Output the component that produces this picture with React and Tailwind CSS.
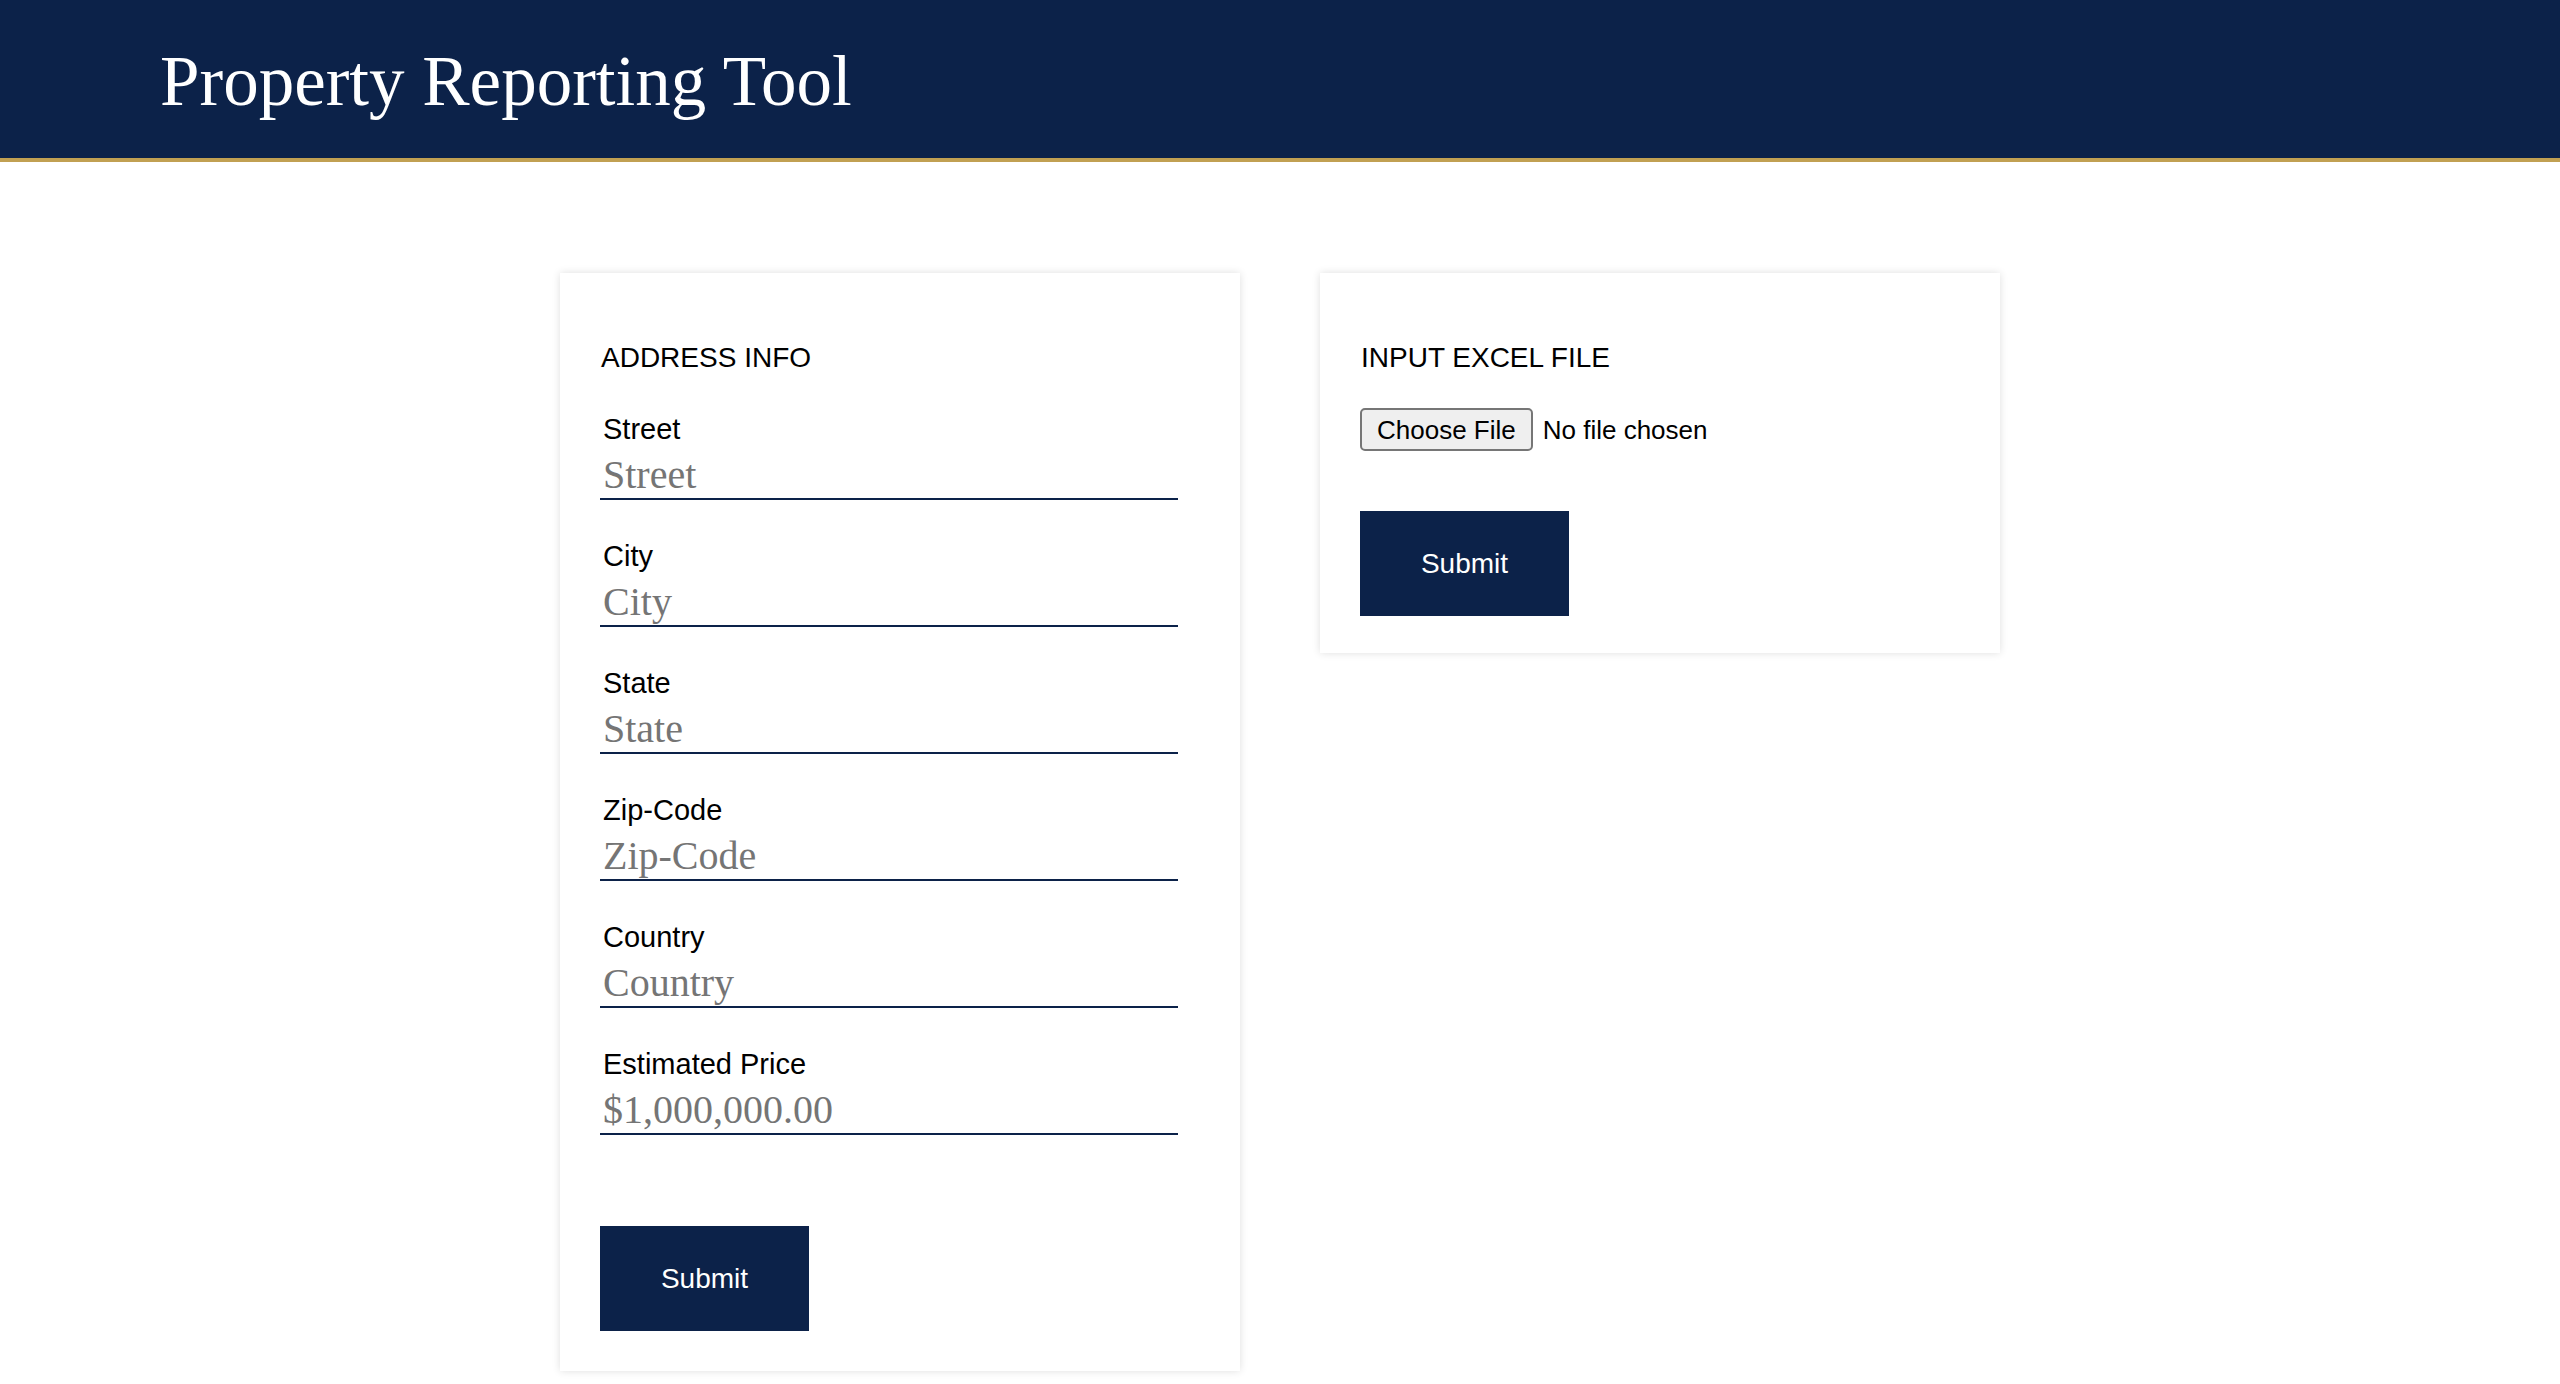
import React from 'react';

const fields = [
  { label: 'Street', placeholder: 'Street' },
  { label: 'City', placeholder: 'City' },
  { label: 'State', placeholder: 'State' },
  { label: 'Zip-Code', placeholder: 'Zip-Code' },
  { label: 'Country', placeholder: 'Country' },
  { label: 'Estimated Price', placeholder: '$1,000,000.00' },
];

const sans = "font-['Liberation_Sans',Arial,sans-serif]";
const serif = "font-['Liberation_Serif','Times_New_Roman',serif]";

const SubmitButton = () => (
  <button
    type="button"
    className={`${sans} w-[209px] h-[105px] bg-[#0c2249] text-white text-[28px] leading-[32px]`}
  >
    Submit
  </button>
);

const Field = ({ label, placeholder }) => (
  <div className="flex flex-col">
    <label className={`${sans} ml-[3px] text-[29px] leading-[32px] text-black`}>{label}</label>
    <input
      type="text"
      placeholder={placeholder}
      className={`${serif} mt-[5px] w-[578px] h-[50px] pl-[3px] text-[40px] leading-[48px] text-black placeholder:text-[#757575] border-b-2 border-[#0c2249] outline-none bg-transparent`}
    />
  </div>
);

export default function App() {
  return (
    <div className="min-h-screen bg-white">
      <header className="h-[162px] bg-[#0c2249] border-b-4 border-[#c1a052] flex items-start pl-[160px]">
        <h1 className={`${serif} mt-[41px] text-[71px] leading-[80px] text-white`}>
          Property Reporting Tool
        </h1>
      </header>

      <main className="flex justify-center items-start gap-[80px] pt-[111px] pb-[20px]">
        <section className="w-[680px] bg-white shadow-[0_0_8px_rgba(0,0,0,0.13)] pl-[40px] pr-[40px] pt-[69px] pb-[40px]">
          <h2 className={`${sans} ml-[1px] text-[28px] leading-[32px] text-black`}>ADDRESS INFO</h2>
          <div className="mt-[39px] flex flex-col gap-[40px]">
            {fields.map(f => (
              <Field key={f.label} label={f.label} placeholder={f.placeholder} />
            ))}
          </div>
          <div className="mt-[91px]">
            <SubmitButton />
          </div>
        </section>

        <section className="w-[680px] bg-white shadow-[0_0_8px_rgba(0,0,0,0.13)] pl-[40px] pr-[40px] pt-[69px] pb-[37px]">
          <h2 className={`${sans} ml-[1px] text-[28px] leading-[32px] text-black`}>INPUT EXCEL FILE</h2>
          <div className={`${sans} mt-[34px] flex items-center gap-[10px] text-[26px] text-black`}>
            <button
              type="button"
              className="h-[43px] px-[15px] bg-[#efefef] border-2 border-[#767676] rounded-[5px] leading-[30px]"
            >
              Choose File
            </button>
            <span className="leading-[30px]">No file chosen</span>
          </div>
          <div className="mt-[60px]">
            <SubmitButton />
          </div>
        </section>
      </main>
    </div>
  );
}
